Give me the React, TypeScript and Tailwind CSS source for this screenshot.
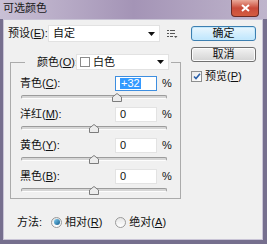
import React from 'react';

const font = "font-['Liberation_Sans','Noto_Sans_CJK_SC',sans-serif]";

function Key({ k }: { k: string }) {
  return (
    <>
      (<u className="underline-offset-1">{k}</u>):
    </>
  );
}

function Arrow() {
  return (
    <svg width="7" height="4" viewBox="0 0 7 4">
      <path d="M0 0 H7 L3.5 4 Z" fill="#111" />
    </svg>
  );
}

function Slider({ pos }: { pos: number }) {
  return (
    <div className="relative ml-[1px] h-[12px] w-[146px]">
      <div className="absolute left-0 right-0 top-[4px] h-[4px] rounded-full border border-[#9c9c9c] border-b-[#fdfdfd] bg-[#d6d6d6]" />
      <svg
        className="absolute top-[2px]"
        style={{ left: pos - 5 }}
        width="10"
        height="9"
        viewBox="0 0 10 9"
      >
        <path d="M5 0.5 L9.5 4 V8.5 H0.5 V4 Z" fill="#ececec" stroke="#7c7c7c" />
      </svg>
    </div>
  );
}

function ValueRow({ label, k, value, pos, active }: { label: string; k: string; value: string; pos: number; active?: boolean }) {
  return (
    <div className="flex flex-col">
      <div className="flex h-[15px] items-center">
        <span className="w-[95px]">
          {label}
          <Key k={k} />
        </span>
        <div
          className={`flex h-[15px] w-[42px] items-center bg-white pl-[4px] ${
            active ? 'border border-[#3d8ee0]' : 'border border-[#e3e3e3]'
          }`}
        >
          {active ? <span className="bg-[#3399ff] px-[1px] text-white">{value}</span> : <span>{value}</span>}
        </div>
        <span className="ml-[5px]">%</span>
      </div>
      <Slider pos={pos} />
    </div>
  );
}

function Radio({ on }: { on?: boolean }) {
  return (
    <span className="flex h-[11px] w-[11px] items-center justify-center rounded-full border border-[#9a9a9a] bg-gradient-to-b from-[#e6e6e6] to-white">
      {on && <span className="h-[6px] w-[6px] rounded-full bg-gradient-to-br from-[#7fd0f6] to-[#0e5d8c]" />}
    </span>
  );
}

function WinButton({ children, primary }: { children: React.ReactNode; primary?: boolean }) {
  return (
    <div
      className={`flex h-[15px] w-[65px] items-center justify-center rounded-[3px] border ${
        primary
          ? 'border-[#3c7fb1] bg-gradient-to-b from-[#eaf6fd] to-[#bee6fd] shadow-[inset_0_0_0_1px_#c5e8fb]'
          : 'border-[#707070] bg-gradient-to-b from-[#f2f2f2] to-[#d4d4d4] shadow-[inset_0_0_0_1px_#fcfcfc]'
      }`}
    >
      {children}
    </div>
  );
}

export default function App() {
  return (
    <div className={`flex h-[244px] w-[267px] flex-col whitespace-nowrap bg-[#766f8e] text-[11px] leading-none text-[#111] ${font}`}>
      {/* title bar */}
      <div className="flex h-[19px] items-start bg-gradient-to-r from-[#c9c0d5] via-[#a494b6] to-[#bfb5cc]">
        <span className="ml-[3px] mt-[3px] text-[11px] text-[#1a1a1a]">可选颜色</span>
        <div className="ml-auto mr-[8px] flex h-[17px] w-[28px] items-center justify-center rounded-b-[4px] border border-t-0 border-[#6b2a25] bg-gradient-to-b from-[#e9a99a] via-[#c94a3a] to-[#d45c40]">
          <svg width="9" height="8" viewBox="0 0 9 8">
            <path d="M1 1 L8 7 M8 1 L1 7" stroke="#fff" strokeWidth="2" />
          </svg>
        </div>
      </div>

      {/* client */}
      <div className="mx-[3px] mb-[4px] mr-[4px] flex flex-1 border border-[#c9c4d6] bg-[#f0f0f0]">
        <div className="flex w-[187px] flex-col pl-[4px]">
          {/* preset */}
          <div className="mt-[5px] flex h-[17px] items-center">
            <span className="w-[40px]">
              预设
              <Key k="E" />
            </span>
            <div className="flex h-[17px] w-[112px] items-center border border-[#e2e2e2] bg-white pl-[4px] pr-[4px]">
              <span>自定</span>
              <span className="ml-auto">
                <Arrow />
              </span>
            </div>
            <svg className="ml-[7px]" width="11" height="8" viewBox="0 0 11 8">
              <path d="M0 0.5 H2 M3 0.5 H8 M0 3.5 H2 M3 3.5 H8 M0 6.5 H2 M3 6.5 H6" stroke="#555" />
              <path d="M7 6 H10.5 L8.75 8 Z" fill="#555" />
            </svg>
          </div>

          {/* group */}
          <fieldset className="ml-[2px] mt-[12px] w-[166px] border border-[#ababab] pb-[2px] pl-[9px] pr-[8px] pt-[6px]">
            <legend className="ml-[5px] flex items-center pl-[12px] pr-[2px]">
              <span className="w-[39px]">
                颜色
                <Key k="O" />
              </span>
              <div className="flex h-[16px] w-[93px] items-center border border-[#e2e2e2] bg-white pl-[3px] pr-[4px]">
                <span className="h-[10px] w-[10px] border border-[#8a8a8a] bg-white" />
                <span className="ml-[3px]">白色</span>
                <span className="ml-auto">
                  <Arrow />
                </span>
              </div>
            </legend>
            <div className="flex flex-col gap-[4px]">
              <ValueRow label="青色" k="C" value="+32" pos={96} active />
              <ValueRow label="洋红" k="M" value="0" pos={73} />
              <ValueRow label="黄色" k="Y" value="0" pos={73} />
              <ValueRow label="黑色" k="B" value="0" pos={73} />
            </div>
          </fieldset>

          {/* method */}
          <div className="ml-[9px] mt-[15px] flex h-[16px] items-center">
            <span>方法:</span>
            <span className="ml-[9px]">
              <Radio on />
            </span>
            <span className="ml-[3px]">
              相对(<u>R</u>)
            </span>
            <span className="ml-[13px]">
              <Radio />
            </span>
            <span className="ml-[3px]">
              绝对(<u>A</u>)
            </span>
          </div>
        </div>

        {/* right column */}
        <div className="flex flex-col pt-[6px]">
          <WinButton primary>确定</WinButton>
          <div className="mt-[6px]">
            <WinButton>取消</WinButton>
          </div>
          <div className="mt-[9px] flex items-center">
            <span className="flex h-[11px] w-[11px] items-center justify-center border border-[#8e8f8f] bg-gradient-to-br from-[#e8e8e8] to-white">
              <svg width="8" height="7" viewBox="0 0 8 7">
                <path d="M1 3.5 L3 5.5 L7 0.8" stroke="#2a5fa8" strokeWidth="1.6" fill="none" />
              </svg>
            </span>
            <span className="ml-[3px]">
              预览(<u>P</u>)
            </span>
          </div>
        </div>
      </div>
    </div>
  );
}
